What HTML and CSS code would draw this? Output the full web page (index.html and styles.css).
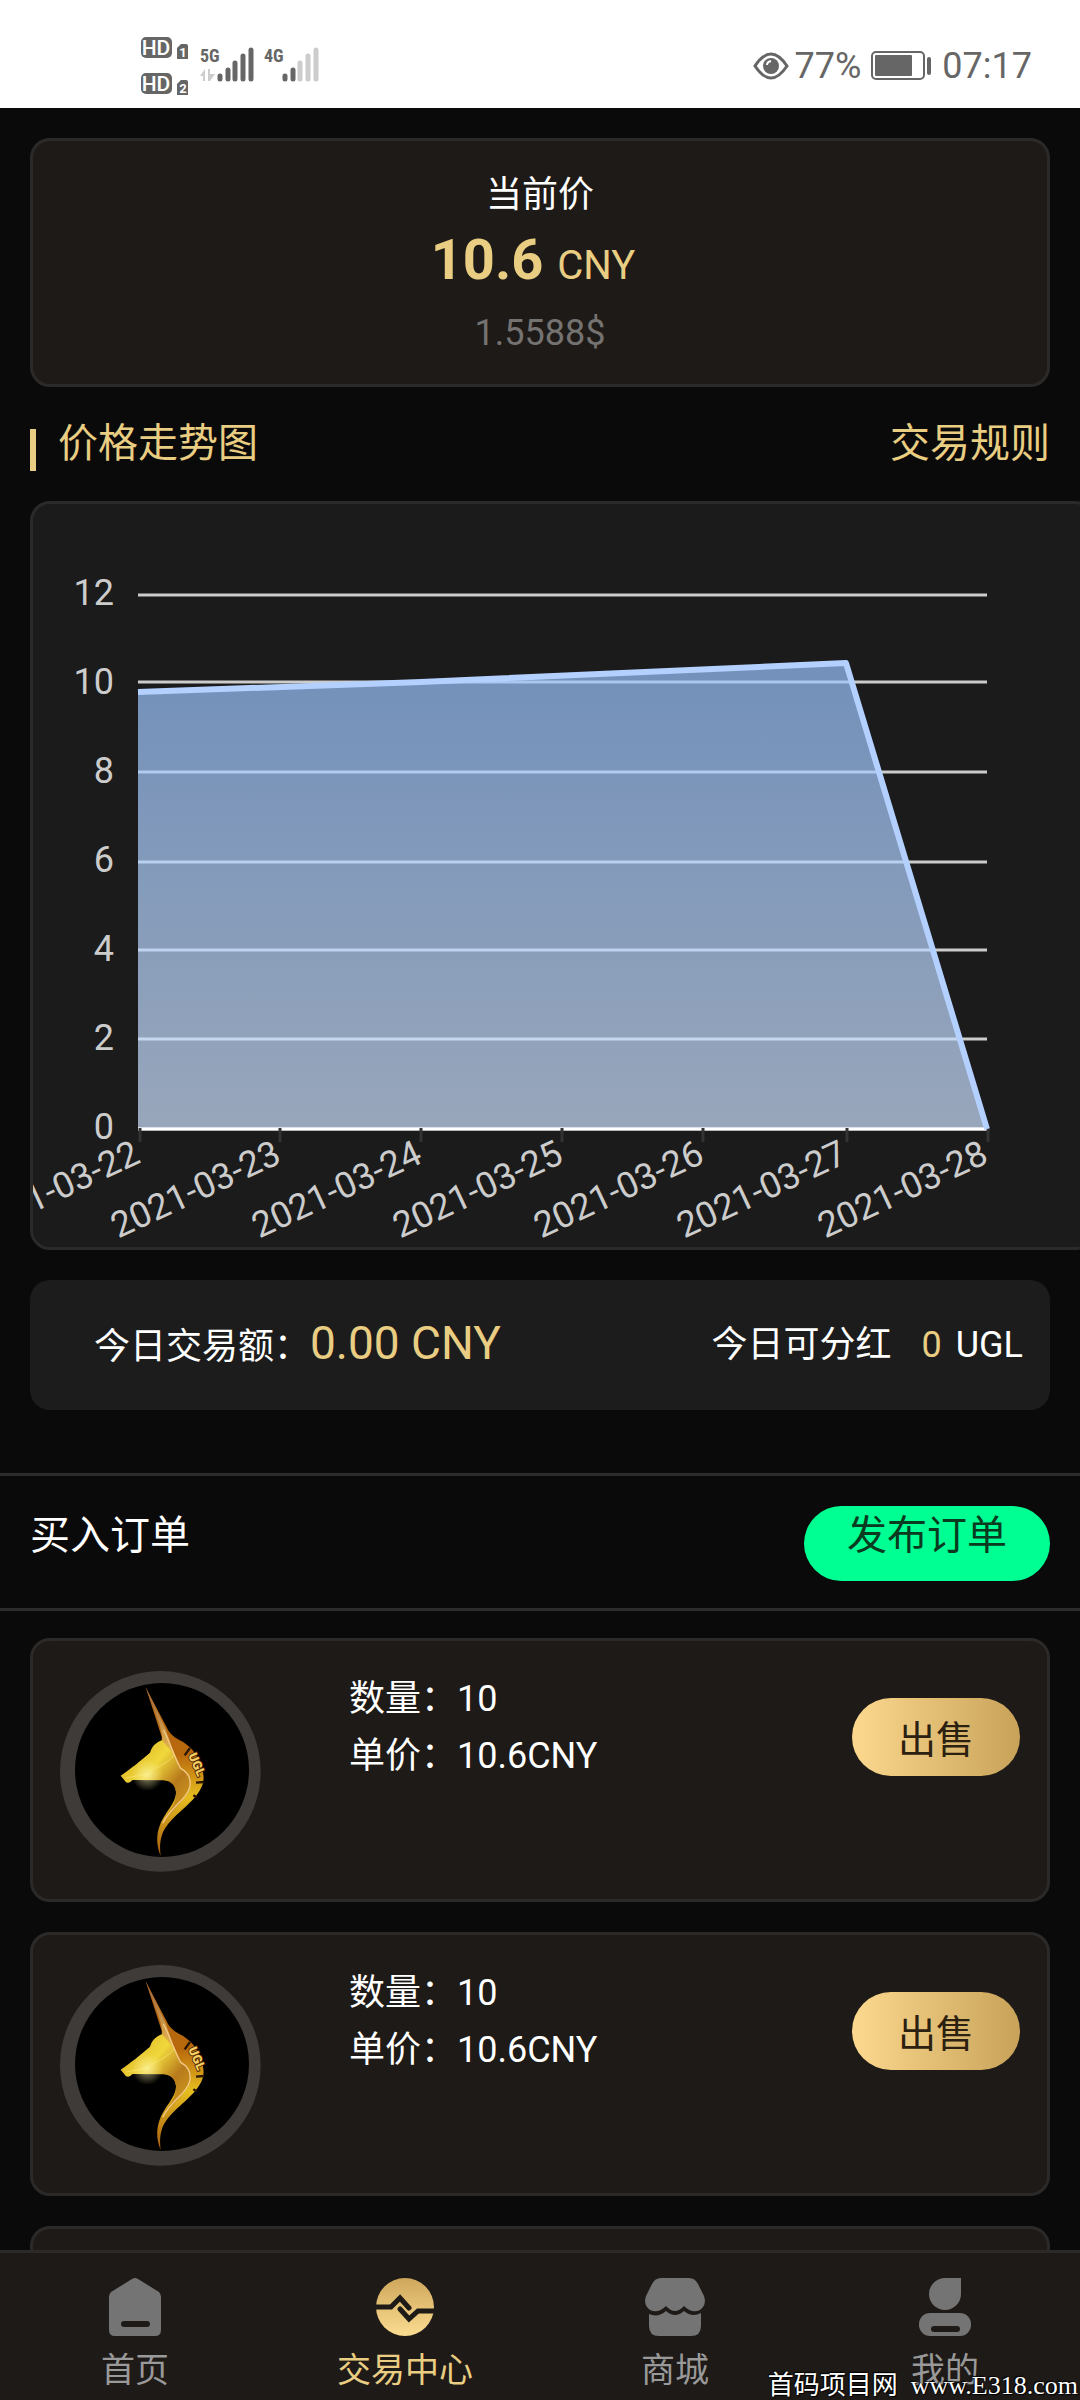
FILE: index.html
```html
<!DOCTYPE html>
<html lang="zh-CN">
<head>
  <meta charset="UTF-8" />
  <meta name="viewport" content="width=device-width, initial-scale=1.0"/>
  <title>交易中心</title>
  <link rel="stylesheet" href="styles.css">
</head>
<body>

  <!-- shared logo -->
  <svg class="sprite" aria-hidden="true">
    <defs>
      <linearGradient id="face" x1="0" y1="0" x2="1" y2="1">
        <stop offset="0" stop-color="#d8a81c"/>
        <stop offset="0.4" stop-color="#f0d83c"/>
        <stop offset="0.65" stop-color="#b87a1c"/>
        <stop offset="1" stop-color="#d8a81c"/>
      </linearGradient>
      <linearGradient id="mane" x1="0" y1="0" x2="0" y2="1">
        <stop offset="0" stop-color="#b06410"/>
        <stop offset="0.4" stop-color="#b8680c"/>
        <stop offset="0.65" stop-color="#e6be20"/>
        <stop offset="1" stop-color="#a85c10"/>
      </linearGradient>
      <linearGradient id="horn" x1="0" y1="0" x2="0" y2="1">
        <stop offset="0" stop-color="#9a6048"/>
        <stop offset="1" stop-color="#e8b84a"/>
      </linearGradient>
      <radialGradient id="glow">
        <stop offset="0" stop-color="#fffbc0" stop-opacity="0.6"/>
        <stop offset="1" stop-color="#fff2a0" stop-opacity="0"/>
      </radialGradient>
    </defs>
    <symbol id="logo" viewBox="30 63 603 603">
      <circle cx="331" cy="364" r="301" fill="#3e3b38"/>
      <circle cx="336" cy="360" r="261" fill="#000"/>
      <path d="M287 112 L350 232 C358 250 372 262 388 270 C420 285 445 315 455 350 C465 385 463 405 440 435 C410 475 350 510 336 555 C328 580 330 600 332 618 C320 590 318 560 328 530 C340 490 380 460 378 425 C376 405 365 391 340 390 L335 260 Z" fill="url(#mane)"/>
      <path d="M337 270 C318 278 308 285 300 308 C275 330 240 358 212 377 L228 397 C238 401 243 393 248 390 L340 391 C368 392 380 415 378 435 C374 470 350 492 337 520 C365 482 410 450 419 410 C423 380 403 362 392 354 C380 325 370 300 350 270 Z" fill="url(#face)"/>
      <path d="M287 112 L346 235 L372 312 L337 272 C338 235 310 175 287 112 Z" fill="url(#horn)"/>
      <path d="M340 240 C360 275 372 320 392 355 C416 368 424 388 419 412 C410 450 362 470 338 520" fill="none" stroke="#f3c98a" stroke-width="4"/>
      <path d="M372 315 C350 345 315 350 292 372 L228 384" fill="none" stroke="#fbe87a" stroke-width="3" opacity="0.6"/>
      <path d="M420 294 L404 316 M462 396 L438 398 M440 442 L430 436" stroke="#2a1604" stroke-width="7"/>
      <text class="logo-text" transform="translate(414 316) rotate(66)">UGL</text>
      <circle cx="292" cy="375" r="48" fill="url(#glow)"/>
    </symbol>
  </svg>

  <div class="app">
    <header class="status-bar">
      <svg class="status-signal" width="180" height="60" viewBox="141 36 180 60" aria-hidden="true">
        <rect x="141" y="37" width="31" height="21" rx="5"/>
        <text class="hd" x="156" y="55">HD</text>
        <path d="M177 48 L181 44 H186 Q188 44 188 46 V59 H177 Z"/>
        <text class="sim" x="183" y="57">1</text>
        <rect x="141" y="73" width="31" height="21" rx="5"/>
        <text class="hd" x="156" y="91">HD</text>
        <path d="M177 84 L181 80 H186 Q188 80 188 82 V95 H177 Z"/>
        <text class="sim" x="183" y="93">2</text>
        <text class="net" x="200" y="62">5G</text>
        <path class="off" d="M200 76 L205 69 V81 H203 V76 Z M208 69 H210 V74 H215 L210 81 H208 Z"/>
        <path class="bars" d="M220 79 V76 M228 79 V70 M235 79 V63 M243 79 V56 M251 79 V50"/>
        <text class="net" x="264" y="62">4G</text>
        <path class="bars" d="M285 79 V76 M293 79 V70"/>
        <path class="bars weak" d="M300 79 V63 M308 79 V56 M316 79 V50"/>
      </svg>
      <div class="status-right">
        <svg width="36" height="28" viewBox="0 0 36 28" aria-hidden="true">
          <path d="M2 14 Q18 -10 34 14 Q18 38 2 14 Z" fill="none" stroke="#666" stroke-width="3"/>
          <circle cx="18" cy="14" r="8" fill="#666"/>
          <path d="M14 13 Q14 10 18 9" fill="none" stroke="#fff" stroke-width="2"/>
        </svg>
        <span class="battery">77%</span>
        <svg width="61" height="30" viewBox="0 0 61 30" aria-hidden="true">
          <rect x="1" y="1" width="52" height="27" rx="4" fill="none" stroke="#666" stroke-width="2"/>
          <rect x="4" y="4" width="37" height="21" rx="1" fill="#666"/>
          <rect x="56" y="6" width="4" height="18" rx="2" fill="#666"/>
        </svg>
        <span class="time">07:17</span>
      </div>
    </header>

    <main class="content">
      <section class="card price-card">
        <div class="price-label">当前价</div>
        <div class="price"><strong>10.6</strong> CNY</div>
        <div class="price-usd">1.5588$</div>
      </section>

      <div class="section-title">
        <h2>价格走势图</h2>
        <a href="#">交易规则</a>
      </div>

      <section class="card chart-card">
        <svg class="chart" viewBox="0 0 1059 743" role="img" aria-label="价格走势图">
          <defs>
            <linearGradient id="area" x1="0" y1="0" x2="0" y2="1">
              <stop offset="0" stop-color="#98c3ff" stop-opacity="0.7"/>
              <stop offset="1" stop-color="#cee2ff" stop-opacity="0.7"/>
            </linearGradient>
          </defs>
          <path class="grid" d="M105 91 H954 M105 178 H954 M105 268 H954 M105 358 H954 M105 446 H954 M105 535 H954 M105 625 H954"/>
          <g class="y-labels">
            <text x="81" y="101">12</text>
            <text x="81" y="190">10</text>
            <text x="81" y="279">8</text>
            <text x="81" y="368">6</text>
            <text x="81" y="457">4</text>
            <text x="81" y="546">2</text>
            <text x="81" y="635">0</text>
          </g>
          <path d="M105 188 L388 178 L813 159 L954 625 H105 Z" fill="url(#area)"/>
          <path class="axis" d="M105 625 H954"/>
          <path class="ticks" d="M107 624 V638 M247 624 V638 M388 624 V638 M529 624 V638 M670 624 V638 M814 624 V638 M955 624 V638"/>
          <path class="line" d="M105 188 L388 178 L813 159 L954 625"/>
          <g class="x-labels">
            <text transform="translate(109 658) rotate(-25)">2021-03-22</text>
            <text transform="translate(250 658) rotate(-25)">2021-03-23</text>
            <text transform="translate(391 658) rotate(-25)">2021-03-24</text>
            <text transform="translate(532 658) rotate(-25)">2021-03-25</text>
            <text transform="translate(673 658) rotate(-25)">2021-03-26</text>
            <text transform="translate(816 658) rotate(-25)">2021-03-27</text>
            <text transform="translate(957 658) rotate(-25)">2021-03-28</text>
          </g>
        </svg>
      </section>

      <section class="stats">
        <div>今日交易额：<span class="amount">0.00 CNY</span></div>
        <div class="bonus"><span>今日可分红</span><span class="gold">0</span><span>UGL</span></div>
      </section>

      <div class="order-head">
        <h2>买入订单</h2>
        <button class="btn btn-publish">发布订单</button>
      </div>

      <div class="orders">
        <article class="card order">
          <svg class="avatar" aria-hidden="true"><use href="#logo"/></svg>
          <div class="order-info">
            <div>数量：10</div>
            <div>单价：10.6CNY</div>
          </div>
          <button class="btn btn-sell">出售</button>
        </article>
        <article class="card order">
          <svg class="avatar" aria-hidden="true"><use href="#logo"/></svg>
          <div class="order-info">
            <div>数量：10</div>
            <div>单价：10.6CNY</div>
          </div>
          <button class="btn btn-sell">出售</button>
        </article>
        <article class="card order"></article>
      </div>
    </main>

    <nav class="tab-bar">
      <a href="#">
        <svg width="60" height="58" viewBox="0 0 60 58" aria-hidden="true">
          <path d="M27 1 Q30 -1 33 1 L54 14 Q56 16 56 19 V52 Q56 58 50 58 H10 Q4 58 4 52 V19 Q4 16 6 14 Z"/>
          <path class="cut" d="M19 46 H42"/>
        </svg>
        <span>首页</span>
      </a>
      <a href="#" class="active">
        <svg width="60" height="58" viewBox="0 0 60 58" aria-hidden="true">
          <defs>
            <linearGradient id="coin" x1="0" y1="0" x2="0" y2="1">
              <stop offset="0" stop-color="#cfa75c"/>
              <stop offset="1" stop-color="#fadc90"/>
            </linearGradient>
          </defs>
          <circle cx="30" cy="29" r="29" fill="url(#coin)"/>
          <path class="wave" d="M0 29 H16 L25 20 L34 30 M25 31 L34 41 L43 33 H60"/>
        </svg>
        <span>交易中心</span>
      </a>
      <a href="#">
        <svg width="60" height="58" viewBox="0 0 60 58" aria-hidden="true">
          <path d="M16 0 H44 Q50 0 53 6 L59 18 Q62 27 55 32 Q47 36 39 28 Q30 38 21 28 Q13 36 5 32 Q-2 27 1 18 L7 6 Q10 0 16 0 Z"/>
          <path d="M4 36 Q13 40 21 33 Q30 41 39 33 Q47 40 56 35 V48 Q56 58 46 58 H14 Q4 58 4 48 Z"/>
        </svg>
        <span>商城</span>
      </a>
      <a href="#">
        <svg width="60" height="58" viewBox="0 0 60 58" aria-hidden="true">
          <path d="M30 0 H46 V16 A16 16 0 1 1 30 0 Z"/>
          <rect x="4" y="35" width="52" height="23" rx="11"/>
          <path class="cut" d="M19 51 H42"/>
        </svg>
        <span>我的</span>
      </a>
    </nav>
    <div class="watermark">首码项目网 &nbsp;www.E318.com</div>
  </div>

</body>
</html>
```
FILE: styles.css
```css
* {
  box-sizing: border-box;
}
body {
  margin: 0;
  background: #0a0a0a;
  color: #fff;
  font-family: Roboto, "Noto Sans CJK SC", sans-serif;
  font-size: 36px;
  line-height: 54px;
}
h2 {
  margin: 0;
  font-size: 40px;
  font-weight: normal;
}
a {
  color: inherit;
  text-decoration: none;
}
.sprite {
  position: absolute;
  width: 0;
  height: 0;
}
.logo-text {
  font-size: 38px;
  font-weight: 900;
  fill: #f6d060;
  stroke: #4a2604;
  stroke-width: 5;
  paint-order: stroke;
}
.app {
  position: relative;
  display: flex;
  flex-direction: column;
  height: 100vh;
}

/* status bar */
.status-bar {
  display: flex;
  flex: none;
  justify-content: space-between;
  align-items: center;
  height: 108px;
  padding: 24px 48px 0 141px;
  background: #fff;
  color: #666;
}
.status-signal {
  fill: #666;
}
.status-signal .hd {
  font-size: 21px;
  font-weight: 500;
  text-anchor: middle;
  fill: #fff;
}
.status-signal .sim {
  font-size: 13px;
  font-weight: bold;
  text-anchor: middle;
  fill: #fff;
}
.status-signal .net {
  font-family: "Roboto Condensed", Roboto, sans-serif;
  font-size: 18px;
  font-weight: bold;
}
.status-signal .off {
  fill: #ccc;
}
.bars {
  stroke: #666;
  stroke-width: 5;
  stroke-linecap: round;
}
.bars.weak {
  stroke: #ccc;
}
.status-right {
  display: flex;
  align-items: center;
  gap: 6px;
}
.status-right .battery {
  margin-right: 4px;
}
.status-right .time {
  margin-left: 4px;
}

/* main */
.content {
  flex: 1;
  min-height: 0;
  padding-top: 30px;
  overflow-x: hidden;
  overflow-y: auto;
  scrollbar-width: none;
}
.card {
  margin: 0 30px;
  background: #1e1a17;
  border: 3px solid #2c2a29;
  border-radius: 20px;
}
.price-card {
  padding: 27px 0 24px;
  text-align: center;
}
.price {
  margin: 3px 0 5px;
  padding-right: 14px;
  color: #e9cd82;
  font-size: 40px;
  line-height: 70px;
}
.price strong {
  margin-right: 4px;
  font-size: 56px;
}
.price-usd {
  color: #757371;
}
.section-title {
  display: flex;
  justify-content: space-between;
  padding: 30px;
  color: #e9cd82;
  font-size: 40px;
}
.section-title h2 {
  display: flex;
  align-items: flex-end;
  gap: 22px;
}
.section-title h2::before {
  content: "";
  width: 6px;
  height: 42px;
  background: #e9cd82;
}
.chart-card {
  margin-right: -15px;
  background: #1b1b1b;
}
.chart {
  display: block;
  width: 100%;
}
.grid {
  stroke: #ccc;
  stroke-width: 3;
}
.axis {
  stroke: #fff;
  stroke-width: 3;
}
.ticks {
  stroke: #333;
  stroke-width: 3;
}
.line {
  fill: none;
  stroke: #b3d0ff;
  stroke-width: 6;
  stroke-linejoin: round;
}
.y-labels,
.x-labels {
  fill: #ccc;
  font-size: 36px;
  text-anchor: end;
}
.stats {
  display: flex;
  justify-content: space-between;
  align-items: center;
  margin: 30px 30px 63px;
  padding: 36px 27px 36px 64px;
  background: #1c1c1c;
  border-radius: 20px;
}
.amount {
  color: #e9cd82;
  font-size: 46px;
}
.bonus {
  display: flex;
}
.gold {
  margin: 0 14px 0 30px;
  color: #e9cd82;
}

/* orders */
.order-head {
  display: flex;
  justify-content: space-between;
  padding: 30px 30px 27px;
  border-top: 3px solid #2c2c2c;
  border-bottom: 3px solid #2c2c2c;
}
.order-head h2 {
  line-height: 60px;
}
.btn {
  border: none;
  border-radius: 40px;
  font-family: inherit;
  cursor: pointer;
}
.btn-publish {
  height: 75px;
  padding: 0 43px 15px;
  background: #00ff92;
  color: #0a3a20;
  font-size: 40px;
  line-height: 60px;
}
.orders {
  display: flex;
  flex-direction: column;
  gap: 30px;
  padding: 27px 0 30px;
}
.order {
  display: flex;
  flex: none;
  align-items: flex-start;
  min-height: 264px;
  padding: 30px 27px 27px;
}
.avatar {
  flex: none;
  width: 201px;
  height: 201px;
}
.order-info {
  flex: 1;
  padding-left: 88px;
  line-height: 57px;
}
.btn-sell {
  width: 168px;
  height: 78px;
  margin-top: 27px;
  padding: 6px 0 0;
  background: linear-gradient(to right, #fcd98f, #c8a259);
  color: #2c2110;
  font-size: 38px;
  line-height: 72px;
}

/* bottom tabs */
.tab-bar {
  display: flex;
  flex: none;
  height: 150px;
  background: #1e1a17;
  border-top: 3px solid #2c2a29;
}
.tab-bar a {
  display: flex;
  flex: 1;
  flex-direction: column;
  align-items: center;
  gap: 7px;
  padding-top: 25px;
  color: #999;
  font-size: 34px;
}
.tab-bar svg {
  fill: #747474;
}
.tab-bar .active {
  color: #e9cd82;
}
.cut,
.wave {
  fill: none;
  stroke: #1e1a17;
  stroke-width: 6;
  stroke-linecap: round;
}
.wave {
  stroke-width: 5;
}
.watermark {
  position: absolute;
  right: 2px;
  bottom: 0;
  color: #fff;
  font-family: "Liberation Serif", "Noto Sans CJK SC", serif;
  font-size: 26px;
  line-height: 28px;
  text-shadow: 1px 1px 1px #000, -1px -1px 1px #000;
}
```
